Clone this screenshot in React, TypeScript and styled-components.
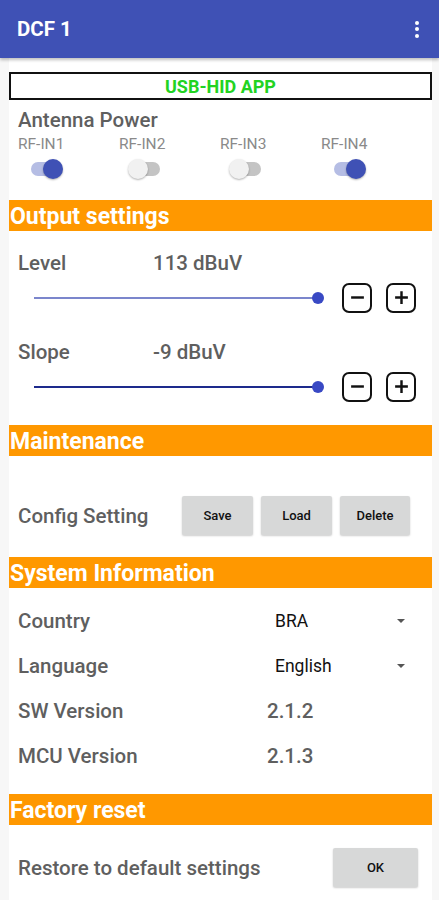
import React from 'react'
import styled, { createGlobalStyle } from 'styled-components'

const GlobalStyle = createGlobalStyle`
    body {
        margin: 0;
        background: #f7f7f7;
        font-family: Roboto, "Liberation Sans", Arial, sans-serif;
    }
`

const Toolbar = styled.div`
    height: 58px;
    background: #3f51b5;
    display: flex;
    align-items: center;
    justify-content: space-between;
    padding: 0 17px;
    box-shadow: 0 2px 3px rgba(0, 0, 0, 0.25);
    position: relative;
    z-index: 1;
`

const Title = styled.div`
    color: #fff;
    font-size: 20.5px;
    font-weight: 700;
`

const MenuDots = styled.div`
    display: flex;
    flex-direction: column;
    gap: 2.5px;
    margin-right: 3px;
    span {
        width: 4px;
        height: 4px;
        border-radius: 50%;
        background: #fff;
    }
`

const Content = styled.div`
    background: #fff;
    margin: 0 7px 0 9px;
    padding-top: 14px;
    min-height: 842px;
`

const UsbBox = styled.div`
    height: 28px;
    box-sizing: border-box;
    border: 2px solid #111;
    display: flex;
    align-items: center;
    justify-content: center;
    color: #22d322;
    font-weight: 700;
    font-size: 18px;
`

const AntennaTitle = styled.div`
    margin-top: 8px;
    padding-left: 9px;
    height: 24px;
    line-height: 24px;
    font-size: 20.5px;
    font-weight: 500;
    color: #5f5f5f;
`

const AntennaGrid = styled.div`
    display: grid;
    grid-template-columns: repeat(4, 101px);
    padding-left: 9px;
`

const RfCell = styled.div`
    display: flex;
    flex-direction: column;
`

const RfLabel = styled.div`
    height: 18px;
    line-height: 18px;
    font-size: 15.5px;
    color: #8a8a8a;
    margin-top: 3px;
`

const SwitchTrack = styled.div<{ $on: boolean }>`
    margin: 4px 0 0 11px;
    width: 34px;
    height: 24px;
    display: flex;
    align-items: center;
    position: relative;
    &::before {
        content: '';
        width: 28px;
        height: 14px;
        border-radius: 7px;
        background: ${p => (p.$on ? '#b5bde4' : '#c4c4c4')};
        margin-left: 2px;
    }
`

const SwitchThumb = styled.div<{ $on: boolean }>`
    position: absolute;
    top: 2px;
    left: ${p => (p.$on ? '14px' : '-2px')};
    width: 20px;
    height: 20px;
    border-radius: 50%;
    background: ${p => (p.$on ? '#3f51b5' : '#f1f1f1')};
    box-shadow: 0 1px 2px rgba(0, 0, 0, 0.3);
`

const SectionHeader = styled.div<{ $top: number }>`
    margin-top: ${p => p.$top}px;
    height: 31px;
    box-sizing: border-box;
    padding: 2px 0 0 1px;
    background: #ff9800;
    color: #fff;
    font-size: 23px;
    font-weight: 700;
    line-height: 29px;
    white-space: nowrap;
    overflow: hidden;
`

const ValueRow = styled.div<{ $top: number }>`
    margin-top: ${p => p.$top}px;
    display: flex;
    align-items: center;
    height: 24px;
    padding-left: 9px;
    font-size: 20.5px;
    font-weight: 500;
    color: #5f5f5f;
`

const ValueLabel = styled.div`
    width: 135px;
`

const SliderRow = styled.div<{ $top: number }>`
    margin-top: ${p => p.$top}px;
    height: 31px;
    display: flex;
    align-items: center;
    padding-left: 25px;
`

const SliderTrack = styled.div<{ $color: string }>`
    width: 284px;
    height: 2px;
    background: ${p => p.$color};
    position: relative;
    margin-right: 24px;
`

const SliderThumb = styled.div`
    position: absolute;
    right: -6px;
    top: -5px;
    width: 12px;
    height: 12px;
    border-radius: 50%;
    background: #3949c4;
`

const StepButton = styled.div`
    width: 30px;
    height: 30px;
    box-sizing: border-box;
    border: 2.5px solid #111;
    border-radius: 7px;
    display: flex;
    align-items: center;
    justify-content: center;
    & + & {
        margin-left: 14px;
    }
`

const ButtonRow = styled.div<{ $top: number }>`
    margin-top: ${p => p.$top}px;
    display: flex;
    align-items: center;
    height: 39px;
    padding-left: 9px;
`

const RowLabel = styled.div<{ $width: number }>`
    width: ${p => p.$width}px;
    font-size: 20.5px;
    font-weight: 500;
    color: #5f5f5f;
    white-space: nowrap;
`

const GreyButton = styled.div<{ $width: number }>`
    width: ${p => p.$width}px;
    height: 39px;
    background: #d7d8d8;
    border-radius: 2px;
    box-shadow: 0 1px 2px rgba(0, 0, 0, 0.2);
    display: flex;
    align-items: center;
    justify-content: center;
    font-size: 13px;
    font-weight: 500;
    color: #111;
    & + & {
        margin-left: 8px;
    }
`

const InfoList = styled.div`
    margin-top: 10px;
`

const InfoRow = styled.div`
    height: 45px;
    display: flex;
    align-items: center;
    padding-left: 9px;
`

const Spinner = styled.div`
    display: flex;
    align-items: center;
    width: 130px;
    padding-left: 8px;
    font-size: 17.5px;
    color: #111;
`

const SpinnerText = styled.span`
    flex: 1;
`

const Caret = styled.span`
    width: 0;
    height: 0;
    border-left: 4px solid transparent;
    border-right: 4px solid transparent;
    border-top: 4px solid #555;
`

const InfoValue = styled.div`
    font-size: 20.5px;
    font-weight: 500;
    color: #5f5f5f;
`

const MinusIcon = () => (
    <svg width="17" height="17" viewBox="0 0 16 16">
        <path d="M2 8h12" stroke="#111" strokeWidth="2.3" />
    </svg>
)

const PlusIcon = () => (
    <svg width="17" height="17" viewBox="0 0 16 16">
        <path d="M2 8h12M8 2v12" stroke="#111" strokeWidth="2.3" />
    </svg>
)

const rfInputs = [
    { label: 'RF-IN1', on: true },
    { label: 'RF-IN2', on: false },
    { label: 'RF-IN3', on: false },
    { label: 'RF-IN4', on: true },
]

const App = () => {
    return (
        <>
            <GlobalStyle />
            <Toolbar>
                <Title>DCF 1</Title>
                <MenuDots><span /><span /><span /></MenuDots>
            </Toolbar>
            <Content>
                <UsbBox>USB-HID APP</UsbBox>

                <AntennaTitle>Antenna Power</AntennaTitle>
                <AntennaGrid>
                    {rfInputs.map(rf => (
                        <RfCell key={rf.label}>
                            <RfLabel>{rf.label}</RfLabel>
                            <SwitchTrack $on={rf.on}>
                                <SwitchThumb $on={rf.on} />
                            </SwitchTrack>
                        </RfCell>
                    ))}
                </AntennaGrid>

                <SectionHeader $top={19}>Output settings</SectionHeader>
                <ValueRow $top={20}>
                    <ValueLabel>Level</ValueLabel>
                    <span>113 dBuV</span>
                </ValueRow>
                <SliderRow $top={7}>
                    <SliderTrack $color="#7b86cc"><SliderThumb /></SliderTrack>
                    <StepButton><MinusIcon /></StepButton>
                    <StepButton><PlusIcon /></StepButton>
                </SliderRow>
                <ValueRow $top={27}>
                    <ValueLabel>Slope</ValueLabel>
                    <span>-9 dBuV</span>
                </ValueRow>
                <SliderRow $top={7}>
                    <SliderTrack $color="#1d2a8c"><SliderThumb /></SliderTrack>
                    <StepButton><MinusIcon /></StepButton>
                    <StepButton><PlusIcon /></StepButton>
                </SliderRow>

                <SectionHeader $top={23}>Maintenance</SectionHeader>
                <ButtonRow $top={40}>
                    <RowLabel $width={164}>Config Setting</RowLabel>
                    <GreyButton $width={71}>Save</GreyButton>
                    <GreyButton $width={71}>Load</GreyButton>
                    <GreyButton $width={70}>Delete</GreyButton>
                </ButtonRow>

                <SectionHeader $top={22}>System Information</SectionHeader>
                <InfoList>
                    <InfoRow>
                        <RowLabel $width={249}>Country</RowLabel>
                        <Spinner><SpinnerText>BRA</SpinnerText><Caret /></Spinner>
                    </InfoRow>
                    <InfoRow>
                        <RowLabel $width={249}>Language</RowLabel>
                        <Spinner><SpinnerText>English</SpinnerText><Caret /></Spinner>
                    </InfoRow>
                    <InfoRow>
                        <RowLabel $width={249}>SW Version</RowLabel>
                        <InfoValue>2.1.2</InfoValue>
                    </InfoRow>
                    <InfoRow>
                        <RowLabel $width={249}>MCU Version</RowLabel>
                        <InfoValue>2.1.3</InfoValue>
                    </InfoRow>
                </InfoList>

                <SectionHeader $top={16}>Factory reset</SectionHeader>
                <ButtonRow $top={23}>
                    <RowLabel $width={315}>Restore to default settings</RowLabel>
                    <GreyButton $width={85}>OK</GreyButton>
                </ButtonRow>
            </Content>
        </>
    )
}

export default App
